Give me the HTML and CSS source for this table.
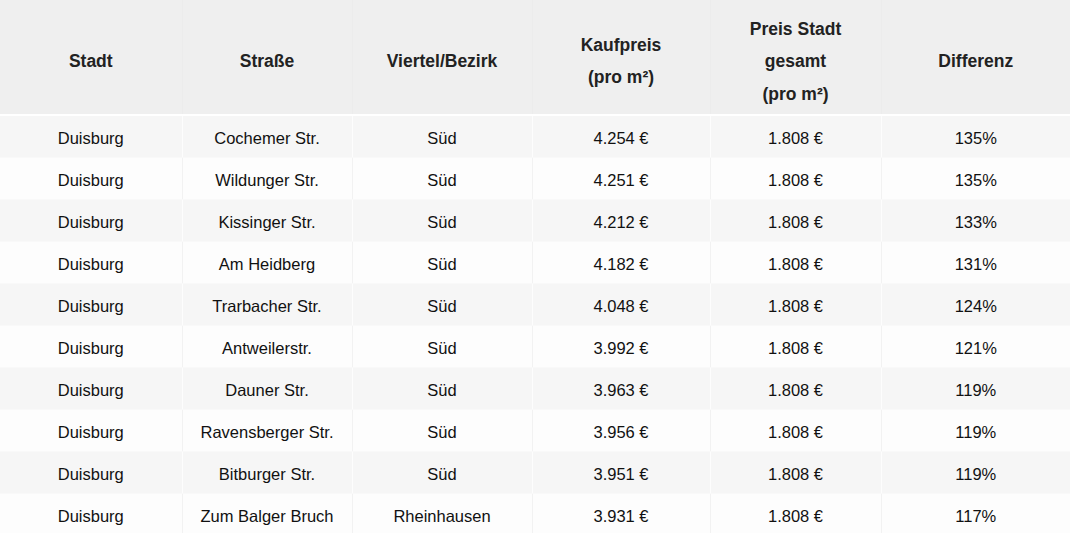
FILE: index.html
```html
<!DOCTYPE html>
<html lang="de">
<head>
<meta charset="utf-8">
<title>Tabelle</title>
<link rel="stylesheet" href="styles.css">
</head>
<body>
<table class="prices">
  <colgroup>
    <col class="c1"><col class="c2"><col class="c3"><col class="c4"><col class="c5"><col class="c6">
  </colgroup>
  <thead>
    <tr>
      <th>Stadt</th>
      <th>Straße</th>
      <th>Viertel/Bezirk</th>
      <th>Kaufpreis<br>(pro m²)</th>
      <th>Preis Stadt<br>gesamt<br>(pro m²)</th>
      <th>Differenz</th>
    </tr>
  </thead>
  <tbody>
    <tr><td>Duisburg</td><td>Cochemer Str.</td><td>Süd</td><td>4.254 €</td><td>1.808 €</td><td>135%</td></tr>
    <tr><td>Duisburg</td><td>Wildunger Str.</td><td>Süd</td><td>4.251 €</td><td>1.808 €</td><td>135%</td></tr>
    <tr><td>Duisburg</td><td>Kissinger Str.</td><td>Süd</td><td>4.212 €</td><td>1.808 €</td><td>133%</td></tr>
    <tr><td>Duisburg</td><td>Am Heidberg</td><td>Süd</td><td>4.182 €</td><td>1.808 €</td><td>131%</td></tr>
    <tr><td>Duisburg</td><td>Trarbacher Str.</td><td>Süd</td><td>4.048 €</td><td>1.808 €</td><td>124%</td></tr>
    <tr><td>Duisburg</td><td>Antweilerstr.</td><td>Süd</td><td>3.992 €</td><td>1.808 €</td><td>121%</td></tr>
    <tr><td>Duisburg</td><td>Dauner Str.</td><td>Süd</td><td>3.963 €</td><td>1.808 €</td><td>119%</td></tr>
    <tr><td>Duisburg</td><td>Ravensberger Str.</td><td>Süd</td><td>3.956 €</td><td>1.808 €</td><td>119%</td></tr>
    <tr><td>Duisburg</td><td>Bitburger Str.</td><td>Süd</td><td>3.951 €</td><td>1.808 €</td><td>119%</td></tr>
    <tr><td>Duisburg</td><td>Zum Balger Bruch</td><td>Rheinhausen</td><td>3.931 €</td><td>1.808 €</td><td>117%</td></tr>
  </tbody>
</table>
</body>
</html>
```
FILE: styles.css
```css
html, body {
  margin: 0;
  padding: 0;
  background: #ffffff;
}
body {
  font-family: "Liberation Sans", Arial, Helvetica, sans-serif;
  color: #111111;
}
.prices {
  width: 1070px;
  border-collapse: collapse;
  table-layout: fixed;
  font-size: 16.5px;
}
.c1 { width: 182px; }
.c2 { width: 170px; }
.c3 { width: 180px; }
.c4 { width: 178px; }
.c5 { width: 171px; }
.c6 { width: 189px; }

.prices th {
  background: #efefef;
  color: #222222;
  font-size: 17.5px;
  font-weight: bold;
  line-height: 32.5px;
  padding: 12.5px 6px 4px;
  text-align: center;
  vertical-align: middle;
  border-bottom: 2px solid #ffffff;
  border-right: 1px solid #ececec;
}
.prices td {
  line-height: 25px;
  padding: 9.5px 6px 6.5px;
  text-align: center;
  vertical-align: middle;
  border-bottom: 1px solid #f9f9f9;
  border-right: 1px solid #fdfdfd;
}
.prices th:last-child,
.prices td:last-child {
  border-right: none;
}
.prices tbody tr:nth-child(odd) td {
  background: #f6f6f6;
}
.prices tbody tr:nth-child(even) td {
  background: #fdfdfd;
  border-right-color: #f2f2f2;
}
```
